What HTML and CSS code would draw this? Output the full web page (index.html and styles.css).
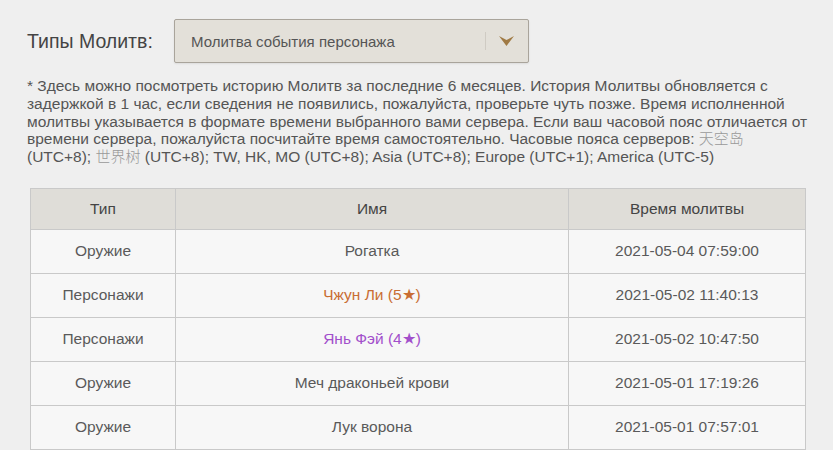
FILE: index.html
```html
<!DOCTYPE html>
<html lang="ru">
<head>
<meta charset="utf-8">
<title>Типы Молитв</title>
<link rel="stylesheet" href="styles.css">
</head>
<body>
<div class="page">
  <div class="filter">
    <span class="filter-label">Типы Молитв:</span>
    <div class="select">
      <span class="select-text">Молитва события персонажа</span>
      <span class="select-sep"></span>
      <svg class="select-arrow" width="15" height="10" viewBox="0 0 15 10"><polygon points="0,0 7.5,4 15,0 7.5,10" fill="#a07a44"/></svg>
    </div>
  </div>
  <p class="note">* Здесь можно посмотреть историю Молитв за последние 6 месяцев. История Молитвы обновляется с задержкой в 1 час, если сведения не появились, пожалуйста, проверьте чуть позже. Время исполненной молитвы указывается в формате времени выбранного вами сервера. Если ваш часовой пояс отличается от времени сервера, пожалуйста посчитайте время самостоятельно. Часовые пояса серверов: <span class="cjk">天空岛</span> (UTC+8); <span class="cjk">世界树</span> (UTC+8); TW, HK, MO (UTC+8); Asia (UTC+8); Europe (UTC+1); America (UTC-5)</p>
  <table class="log">
    <thead>
      <tr><th class="c1">Тип</th><th class="c2">Имя</th><th class="c3">Время молитвы</th></tr>
    </thead>
    <tbody>
      <tr><td>Оружие</td><td>Рогатка</td><td>2021-05-04 07:59:00</td></tr>
      <tr><td>Персонажи</td><td class="r5">Чжун Ли (5★)</td><td>2021-05-02 11:40:13</td></tr>
      <tr><td>Персонажи</td><td class="r4">Янь Фэй (4★)</td><td>2021-05-02 10:47:50</td></tr>
      <tr><td>Оружие</td><td>Меч драконьей крови</td><td>2021-05-01 17:19:26</td></tr>
      <tr><td>Оружие</td><td>Лук ворона</td><td>2021-05-01 07:57:01</td></tr>
    </tbody>
  </table>
</div>
</body>
</html>
```

FILE: styles.css
```css
html, body {
  margin: 0;
  padding: 0;
}
body {
  background: #efefef;
  font-family: "Liberation Sans", Arial, sans-serif;
  color: #555;
  overflow: hidden;
}
.page {
  padding: 19px 0 0 27px;
}
.filter {
  display: flex;
  align-items: center;
  height: 44px;
}
.filter-label {
  font-size: 19.5px;
  color: #444;
  width: 147px;
}
.select {
  box-sizing: border-box;
  width: 355px;
  height: 44px;
  border: 1px solid #a9a49b;
  border-radius: 2px;
  background: #e3e0d9;
  display: flex;
  align-items: center;
  padding-left: 16px;
  box-shadow: 0 1px 2px rgba(0,0,0,0.08);
}
.select-text {
  font-size: 15px;
  color: #555;
  width: 294px;
}
.select-sep {
  width: 1px;
  height: 18px;
  background: #cfcbc3;
  margin-right: 13px;
}
.select-arrow {
  display: block;
}
.note {
  margin: 14px 0 0 0;
  width: 783px;
  font-size: 15.5px;
  line-height: 17.8px;
  color: #555;
}
.cjk {
  font-family: "Noto Sans CJK SC", sans-serif;
  font-size: 15px;
  line-height: 1;
  color: #999;
  font-weight: 300;
}
.log {
  margin: 22px 0 0 3px;
  border-collapse: collapse;
  width: 772px;
  table-layout: fixed;
  font-size: 15.5px;
}
.log th, .log td {
  border: 1px solid #c9c9c9;
  text-align: center;
  padding: 0;
}
.log th {
  background: #dfddd8;
  color: #444;
  font-weight: normal;
  height: 40px;
}
.log td {
  background: #f7f7f7;
  height: 43px;
  color: #5a5a5a;
}
.c1 { width: 144px; }
.c2 { width: 392px; }
.c3 { width: 236px; }
.log td.r5 { color: #c96d33; }
.log td.r4 { color: #a24fcb; }
```
